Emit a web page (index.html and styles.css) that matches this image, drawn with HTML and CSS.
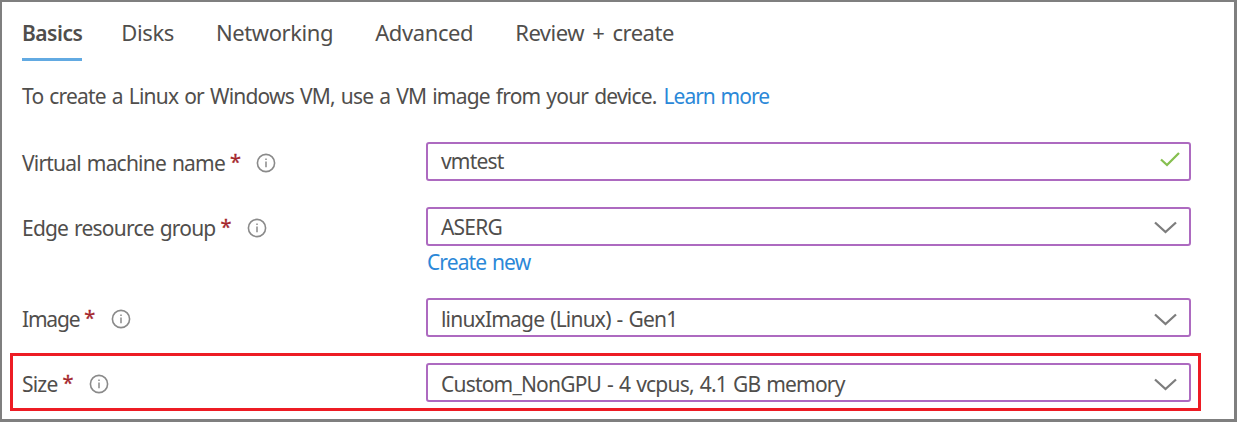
FILE: index.html
```html
<!DOCTYPE html>
<html lang="en">
<head>
<meta charset="utf-8">
<title>Create a virtual machine</title>
<link rel="stylesheet" href="styles.css">
</head>
<body>
<svg class="defs" aria-hidden="true">
  <symbol id="info" viewBox="0 0 20 20"><circle cx="10" cy="10" r="8.600" fill="none" stroke="#8a8a8a" stroke-width="1.600"/><path d="M10 8.600v5.600M10 5.400v1.700" fill="none" stroke="#8a8a8a" stroke-width="1.500"/></symbol>
  <symbol id="chevron" viewBox="0 0 24 14"><path d="M2 1.500 12.500 11 23 1.500" fill="none" stroke="#7d7d7d" stroke-width="2.300"/></symbol>
  <symbol id="check" viewBox="0 0 20 15"><path d="M1 7.500 7 13 19 1" fill="none" stroke="#86bf50" stroke-width="2.300"/></symbol>
</svg>
<main class="panel">
  <nav class="tabs">
    <a class="tab tab-active">Basics</a>
    <a class="tab">Disks</a>
    <a class="tab">Networking</a>
    <a class="tab">Advanced</a>
    <a class="tab tab-review">Review + create</a>
  </nav>
  <p class="intro"><span>To create a Linux or Windows VM, use a VM image from your device.</span><a class="link learn">Learn more</a></p>
  <form class="form">
    <div class="row">
      <label class="label"><span>Virtual machine name</span><span class="req">*</span><svg class="info"><use href="#info"/></svg></label>
      <div class="field field-input"><span>vmtest</span><svg class="check"><use href="#check"/></svg></div>
    </div>
    <div class="row row-group">
      <label class="label"><span>Edge resource group</span><span class="req">*</span><svg class="info"><use href="#info"/></svg></label>
      <div class="field"><span>ASERG</span><svg class="chevron"><use href="#chevron"/></svg></div>
      <a class="link create">Create new</a>
    </div>
    <div class="row">
      <label class="label"><span class="label-image">Image</span><span class="req">*</span><svg class="info"><use href="#info"/></svg></label>
      <div class="field field-low"><span>linuxImage (Linux) - Gen1</span><svg class="chevron"><use href="#chevron"/></svg></div>
    </div>
    <div class="row row-highlight">
      <label class="label"><span>Size</span><span class="req">*</span><svg class="info"><use href="#info"/></svg></label>
      <div class="field field-low"><span>Custom_NonGPU - 4 vcpus, 4.1 GB memory</span><svg class="chevron"><use href="#chevron"/></svg></div>
    </div>
  </form>
</main>
</body>
</html>
```

FILE: styles.css
```css
* { box-sizing: border-box; }
body { margin: 0; background: #fff; }
.defs { display: none; }
.panel {
  width: 1237px;
  height: 422px;
  border: solid #7f7f7f;
  border-width: 2px 3px 3px 2px;
  font: 21px/28px "Noto Sans", "Open Sans", sans-serif;
  letter-spacing: -0.8px;
  word-spacing: 1.3px;
  color: #504e4c;
  white-space: nowrap;
}
.tabs { display: flex; height: 59px; padding: 17px 0 0 20px; }
.tab {
  height: 42px;
  margin-right: 42px;
  font-size: 22px;
  line-height: 26px;
  letter-spacing: -0.4px;
}
.tab-active {
  margin-right: 39px;
  font-size: 21px;
  line-height: 28px;
  font-weight: 600;
  letter-spacing: -0.5px;
  border-bottom: 3px solid #62aae2;
}
.tab-review { letter-spacing: -0.5px; word-spacing: 3px; }
.intro { display: flex; gap: 7px; margin: 0; padding: 21px 0 0 20px; height: 81px; }
.link { color: #2b88d8; }
.learn { letter-spacing: -1px; }
.row {
  display: grid;
  grid-template-columns: 404px 765px;
  grid-template-rows: 39px;
  padding-left: 20px;
  margin-bottom: 26px;
}
.row-group { grid-template-rows: 39px 26px; }
.create { grid-column: 2; padding-left: 1px; line-height: 33px; letter-spacing: -0.9px; }
.label { display: flex; align-items: center; padding-top: 3px; }
.label-image { letter-spacing: -1.2px; }
.req { color: #a4262c; margin: -2px 0 0 5px; font-size: 20px; -webkit-text-stroke: 0.3px #a4262c; }
.info { width: 20px; height: 20px; margin-left: 16px; }
.field {
  display: flex;
  align-items: center;
  justify-content: space-between;
  padding: 0 12px 0 13px;
  border: 2px solid #ad6ac0;
  border-radius: 3px;
}
.field-input { padding-bottom: 2px; }
.field-low { padding-top: 2px; }
.chevron { width: 24px; height: 14px; margin-top: 3px; }
.check { width: 20px; height: 15px; margin: 0 -3px 2px 0; }
.row-highlight {
  width: 1191px;
  height: 58px;
  margin: -10px 0 0 8px;
  padding: 7px 0 0 9px;
  border: 3px solid #ed1c24;
}
```
